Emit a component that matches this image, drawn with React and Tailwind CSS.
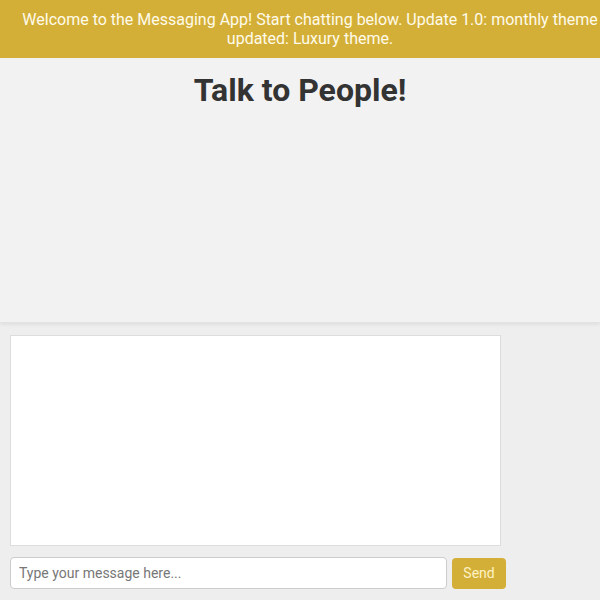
import React from 'react'

const App = () => {
  return (
    <div className="min-h-[600px] overflow-hidden bg-[#eeeeee] font-['Roboto',sans-serif]">
      <div className="w-[620px] bg-[#d4af37] px-[10px] py-[10px] text-center text-[16px] leading-[19px] text-[#fffbea]">
        Welcome to the Messaging App! Start chatting below. Update 1.0: monthly theme updated: Luxury theme.
      </div>

      {/* Title area */}
      <div className="h-[265px] bg-[#f2f2f2] border-b border-[#e2e2e2] shadow-[0_2px_3px_rgba(0,0,0,0.06)]">
        <h1 className="pt-[13px] text-center text-[32px] font-bold leading-[38px] text-[#333333]">
          Talk to People!
        </h1>
      </div>

      {/* Chat */}
      <div className="px-[10px] pt-[12px]">
        <div className="h-[211px] w-[491px] border border-[#dddddd] bg-white"></div>
        <div className="mt-[11px] flex items-center gap-[5px]">
          <input
            type="text"
            placeholder="Type your message here..."
            className="h-[32px] w-[437px] rounded-[4px] border border-[#cccccc] bg-white px-[8px] text-[14px] text-[#333] placeholder:text-[#777777] outline-none"
          />
          <button className="h-[31px] w-[54px] rounded-[4px] bg-[#d4af37] text-[14px] text-[#fdf2c4]">
            Send
          </button>
        </div>
      </div>
    </div>
  )
}

export default App
